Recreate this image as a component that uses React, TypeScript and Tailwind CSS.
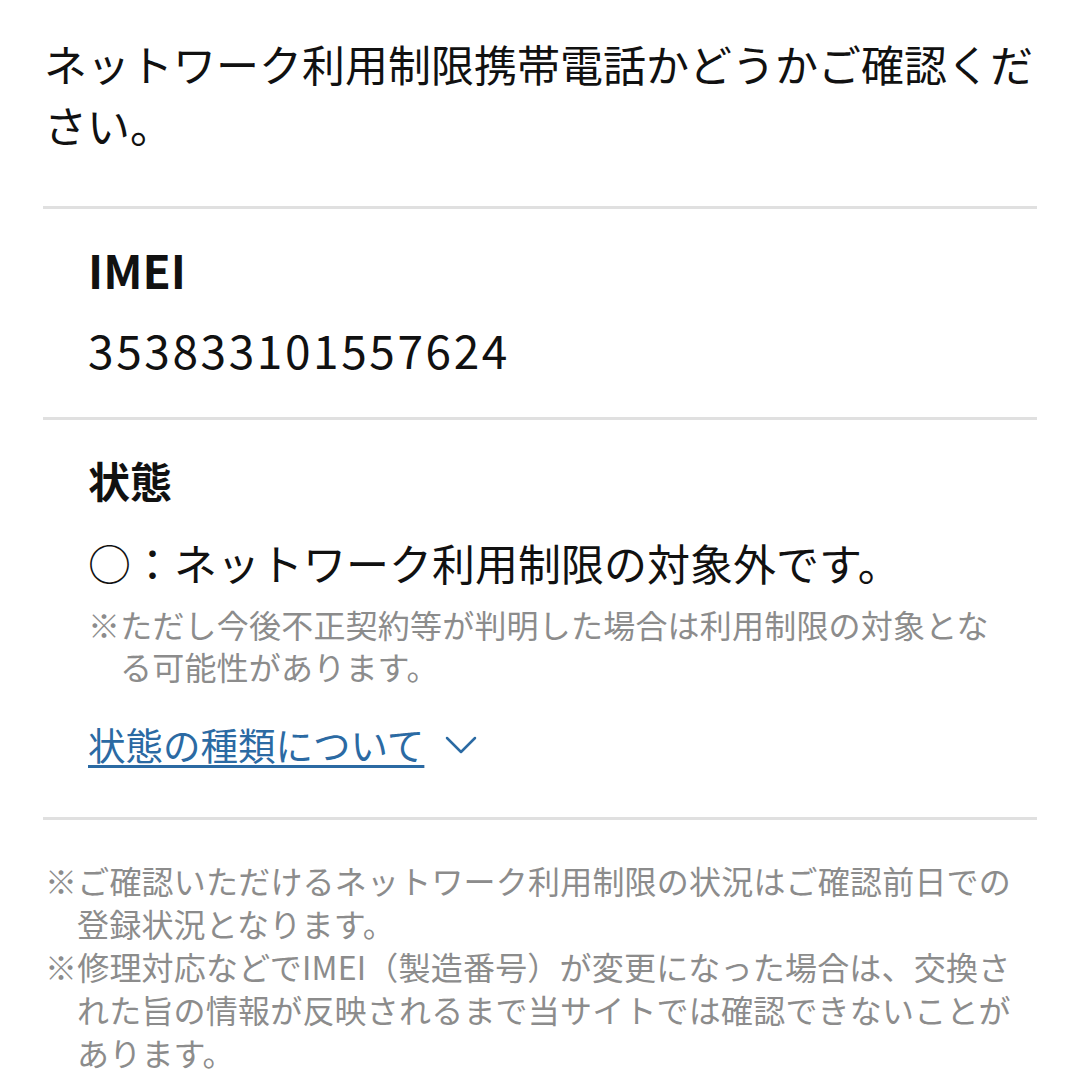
import React from 'react';

const jp = { fontFamily: '"Noto Sans CJK JP", "Noto Sans", sans-serif' };

const Divider = () => <div className="h-[3px] bg-[#e0e0e0]" />;

export default function App() {
  return (
    <div className="w-[1080px] h-[1080px] bg-white overflow-hidden px-[43px] text-[#111]" style={jp}>
      {/* 見出し */}
      <p className="pt-[33px] pb-[51px] text-[43px] leading-[61px] pl-[1px] whitespace-nowrap">
        ネットワーク利用制限携帯電話かどうかご確認くだ<br />さい。
      </p>
      <Divider />

      {/* IMEI */}
      <div className="pl-[45px] pt-[32px] pb-[40px]">
        <div className="text-[46px] leading-[56px] font-bold">IMEI</div>
        <div className="mt-[24px] text-[46px] leading-[56px] tracking-[2.6px]">353833101557624</div>
      </div>
      <Divider />

      {/* 状態 */}
      <div className="pl-[45px] pt-[32px] pb-[48px]">
        <div className="text-[42px] leading-[56px] font-bold">状態</div>
        <div className="mt-[26px] text-[43px] leading-[56px] whitespace-nowrap">○：ネットワーク利用制限の対象外です。</div>
        <p className="mt-[13px] text-[32px] leading-[42px] text-[#8c8c8c] pl-[1em] -indent-[1em] whitespace-nowrap tracking-[0.2px]">
          ※ただし今後不正契約等が判明した場合は利用制限の対象とな<br />る可能性があります。
        </p>
        <div className="mt-[32px] flex items-center gap-[21px] text-[37.5px] leading-[50px] text-[#2b6aa3]">
          <span className="underline decoration-[3px] underline-offset-[5px]">状態の種類について</span>
          <svg width="32" height="18" viewBox="0 0 32 18" fill="none" className="mt-[2px]">
            <polyline points="2,2 16,16 30,2" stroke="#2b6aa3" strokeWidth="2.5" strokeLinecap="round" strokeLinejoin="round" />
          </svg>
        </div>
      </div>
      <Divider />

      {/* 注意事項 */}
      <div className="pt-[39px] text-[32px] leading-[43px] text-[#8c8c8c] pl-[2px] whitespace-nowrap tracking-[0.2px]">
        <p className="pl-[1em] -indent-[1em]">
          ※ご確認いただけるネットワーク利用制限の状況はご確認前日での<br />登録状況となります。
        </p>
        <p className="pl-[1em] -indent-[1em]">
          ※修理対応などでIMEI（製造番号）が変更になった場合は、交換さ<br />れた旨の情報が反映されるまで当サイトでは確認できないことが<br />あります。
        </p>
      </div>
    </div>
  );
}
